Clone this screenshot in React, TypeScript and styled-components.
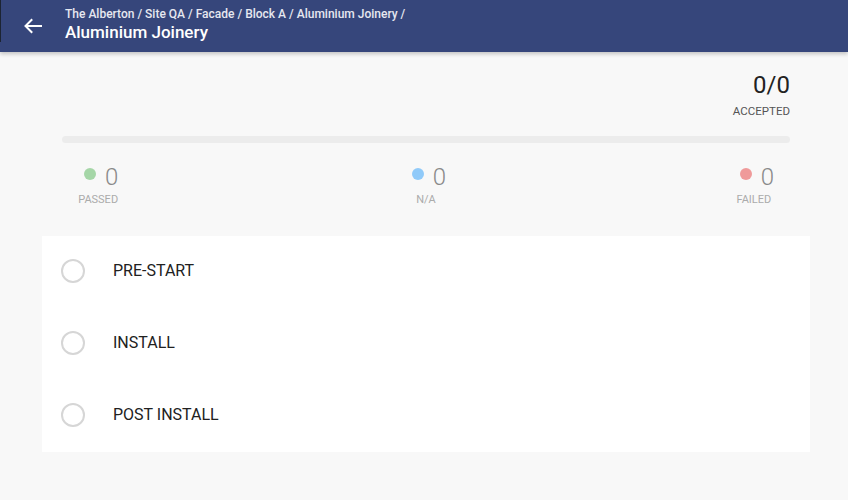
import React from "react";
import styled, { createGlobalStyle } from "styled-components";

const Global = createGlobalStyle`
  html, body { margin: 0; padding: 0; background: #f8f8f8; }
  body { font-family: Roboto, "Liberation Sans", Arial, sans-serif; }
  * { box-sizing: border-box; }
`;

const Page = styled.div`
  width: 848px;
  min-height: 500px;
  background: #f8f8f8;
`;

const Header = styled.header`
  position: relative;
  height: 52px;
  background: #36467b;
  display: flex;
  align-items: flex-start;
  padding-left: 21px;
  box-shadow: 0 2px 4px rgba(0, 0, 0, 0.22);
  &::before {
    content: "";
    position: absolute;
    left: 0;
    top: 0;
    width: 1px;
    height: 42px;
    background: #1c2433;
  }
`;

const BackButton = styled.button`
  border: 0;
  padding: 0;
  margin: 14px 0 0 0;
  background: transparent;
  width: 24px;
  height: 24px;
  display: flex;
  cursor: pointer;
`;

const TitleBlock = styled.div`
  margin-left: 20px;
  padding-top: 6px;
  display: flex;
  flex-direction: column;
`;

const Crumbs = styled.div`
  font-size: 12px;
  line-height: 16px;
  font-weight: 500;
  color: #e6e8f0;
  white-space: nowrap;
`;

const Title = styled.div`
  font-size: 17px;
  line-height: 20px;
  font-weight: 500;
  color: #ffffff;
  white-space: nowrap;
`;

const Main = styled.main`
  padding: 19px 0 0 42px;
  width: 810px;
`;

const Summary = styled.section`
  padding: 0 20px;
  display: flex;
  flex-direction: column;
`;

const Accepted = styled.div`
  display: flex;
  flex-direction: column;
  align-items: flex-end;
`;

const Ratio = styled.div`
  font-size: 24px;
  line-height: 28px;
  color: #222;
`;

const AcceptedLabel = styled.div`
  margin-top: 4px;
  font-size: 11.5px;
  line-height: 16px;
  color: #555;
`;

const Track = styled.div`
  margin-top: 17px;
  height: 7px;
  border-radius: 4px;
  background: #ececec;
`;

const Stats = styled.div`
  margin-top: 20px;
  padding: 0 16px;
  display: flex;
  justify-content: space-between;
`;

const Stat = styled.div`
  display: flex;
  flex-direction: column;
  align-items: center;
`;

const StatTop = styled.div`
  display: flex;
  align-items: flex-start;
`;

const Dot = styled.span<{ $color: string }>`
  width: 12px;
  height: 12px;
  border-radius: 50%;
  margin: 5px 9px 0 6px;
  background: ${(p) => p.$color};
`;

const StatValue = styled.span`
  font-size: 24px;
  line-height: 28px;
  font-weight: 300;
  color: #8a8a8a;
`;

const StatLabel = styled.span`
  margin-top: 1px;
  font-size: 11px;
  line-height: 16px;
  color: #ababab;
`;

const Card = styled.section`
  margin-top: 28px;
  width: 768px;
  background: #ffffff;
  display: flex;
  flex-direction: column;
`;

const Row = styled.div`
  height: 72px;
  padding: 0 0 3px 19px;
  display: flex;
  align-items: center;
`;

const Check = styled.span`
  width: 24px;
  height: 24px;
  border-radius: 50%;
  border: 2.5px solid #d6d6d6;
  flex: none;
`;

const RowLabel = styled.span`
  margin-left: 28px;
  font-size: 16px;
  color: #212121;
`;

const stats = [
  { label: "PASSED", color: "#a5d6a7", value: 0 },
  { label: "N/A", color: "#90caf9", value: 0 },
  { label: "FAILED", color: "#ef9a9a", value: 0 },
];

const sections = ["PRE-START", "INSTALL", "POST INSTALL"];

export default function App() {
  return (
    <Page>
      <Global />
      <Header>
        <BackButton aria-label="Back">
          <svg width="24" height="24" viewBox="0 0 24 24" fill="none">
            <path
              d="M20 12H5.5M10.5 6L4.5 12L10.5 18"
              stroke="#ffffff"
              strokeWidth="2"
              strokeLinecap="square"
            />
          </svg>
        </BackButton>
        <TitleBlock>
          <Crumbs>The Alberton / Site QA / Facade / Block A / Aluminium Joinery /</Crumbs>
          <Title>Aluminium Joinery</Title>
        </TitleBlock>
      </Header>
      <Main>
        <Summary>
          <Accepted>
            <Ratio>0/0</Ratio>
            <AcceptedLabel>ACCEPTED</AcceptedLabel>
          </Accepted>
          <Track />
          <Stats>
            {stats.map((s) => (
              <Stat key={s.label}>
                <StatTop>
                  <Dot $color={s.color} />
                  <StatValue>{s.value}</StatValue>
                </StatTop>
                <StatLabel>{s.label}</StatLabel>
              </Stat>
            ))}
          </Stats>
        </Summary>
        <Card>
          {sections.map((s) => (
            <Row key={s}>
              <Check />
              <RowLabel>{s}</RowLabel>
            </Row>
          ))}
        </Card>
      </Main>
    </Page>
  );
}
